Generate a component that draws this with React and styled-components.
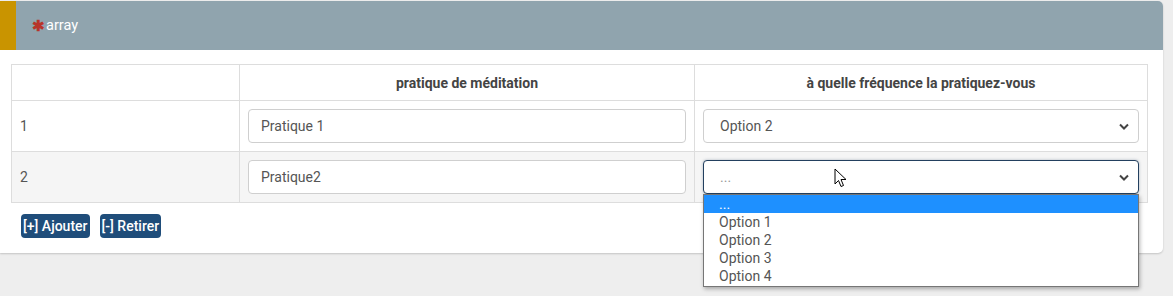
import React from "react";
import styled, { createGlobalStyle } from "styled-components";

const GlobalStyle = createGlobalStyle`
  body {
    margin: 0;
    background: #eeeeee;
    font-family: Roboto, "Liberation Sans", sans-serif;
  }
`;

const rows = [
  { id: 1, practice: "Pratique 1", frequency: "Option 2" },
  { id: 2, practice: "Pratique2", frequency: "...", open: true },
];

const options = ["...", "Option 1", "Option 2", "Option 3", "Option 4"];

function Chevron() {
  return (
    <svg width="10" height="7" viewBox="0 0 10 7">
      <path d="M1 1.5 L5 5.5 L9 1.5" fill="none" stroke="#444" strokeWidth="2" />
    </svg>
  );
}

function Cursor() {
  return (
    <svg width="14" height="20" viewBox="0 0 14 20">
      <path
        d="M1 1 L1 16 L4.5 12.5 L7 18.5 L9.5 17.5 L7 11.5 L12 11.5 Z"
        fill="#fff"
        stroke="#000"
        strokeWidth="1"
        strokeLinejoin="round"
      />
    </svg>
  );
}

export default function App() {
  return (
    <Page>
      <GlobalStyle />
      <Panel>
        <Header>
          <Required>✱</Required>array
        </Header>
        <Body>
          <Table>
            <thead>
              <tr>
                <HeadCell $width={228}></HeadCell>
                <HeadCell $width={455}>pratique de méditation</HeadCell>
                <HeadCell>à quelle fréquence la pratiquez-vous</HeadCell>
              </tr>
            </thead>
            <tbody>
              {rows.map((row) => (
                <Row key={row.id} $striped={row.id % 2 === 0}>
                  <Cell>{row.id}</Cell>
                  <Cell>
                    <TextInput value={row.practice} readOnly />
                  </Cell>
                  <Cell>
                    <SelectWrap>
                      <SelectBox $focused={row.open}>
                        <SelectValue $muted={row.frequency === "..."}>
                          {row.frequency}
                        </SelectValue>
                        <Chevron />
                      </SelectBox>
                      {row.open && (
                        <>
                          <CursorSpot>
                            <Cursor />
                          </CursorSpot>
                          <ListBox>
                            {options.map((opt) => (
                              <OptionItem key={opt} $active={opt === row.frequency}>
                                {opt}
                              </OptionItem>
                            ))}
                          </ListBox>
                        </>
                      )}
                    </SelectWrap>
                  </Cell>
                </Row>
              ))}
            </tbody>
          </Table>
          <Actions>
            <ActionButton>[+] Ajouter</ActionButton>
            <ActionButton>[-] Retirer</ActionButton>
          </Actions>
        </Body>
      </Panel>
    </Page>
  );
}

const Page = styled.div`
  min-height: 296px;
  padding-top: 1px;
  box-sizing: border-box;
`;

const Panel = styled.div`
  width: 1163px;
  background: #fff;
  border-radius: 0 5px 5px 0;
  box-shadow: 0 1px 2px rgba(0, 0, 0, 0.18);
`;

const Header = styled.div`
  height: 49px;
  display: flex;
  align-items: center;
  padding-left: 16px;
  background: #90a4ae;
  border-left: 16px solid #c99400;
  border-top-right-radius: 5px;
  color: #fff;
  font-size: 14.5px;
`;

const Required = styled.span`
  color: #b8342a;
  font-size: 15px;
  font-weight: 700;
  margin-right: 1px;
`;

const Body = styled.div`
  padding: 14px 15px 15px 11px;
`;

const Table = styled.table`
  width: 1137px;
  border-collapse: collapse;
  table-layout: fixed;
  border: 1px solid #dddddd;
  font-size: 14px;
  color: #555;
`;

const HeadCell = styled.th`
  box-sizing: border-box;
  width: ${(p) => (p.$width ? `${p.$width}px` : "auto")};
  height: 36px;
  padding: 0 8px;
  border: 1px solid #dddddd;
  font-size: 14px;
  font-weight: 700;
  color: #444;
  text-align: center;
`;

const Row = styled.tr`
  background: ${(p) => (p.$striped ? "#f5f5f5" : "#fff")};
`;

const Cell = styled.td`
  height: 51px;
  padding: 0 8px;
  border: 1px solid #dddddd;
  box-sizing: border-box;
`;

const TextInput = styled.input`
  box-sizing: border-box;
  width: 100%;
  height: 34px;
  padding: 0 12px;
  border: 1px solid #cfcfcf;
  border-radius: 4px;
  background: #fff;
  font-family: Roboto, "Liberation Sans", sans-serif;
  font-size: 14px;
  color: #555;
  outline: none;
`;

const SelectWrap = styled.div`
  position: relative;
`;

const SelectBox = styled.div`
  box-sizing: border-box;
  height: 34px;
  display: flex;
  align-items: center;
  justify-content: space-between;
  padding: 0 9px 0 16px;
  border: 1px solid ${(p) => (p.$focused ? "#23405f" : "#cfcfcf")};
  border-radius: 4px;
  background: #fff;
  box-shadow: ${(p) => (p.$focused ? "0 0 3px rgba(35, 64, 95, 0.35)" : "none")};
`;

const SelectValue = styled.span`
  color: ${(p) => (p.$muted ? "#999" : "#555")};
  font-size: 14px;
`;

const CursorSpot = styled.div`
  position: absolute;
  left: 131px;
  top: 8px;
  line-height: 0;
`;

const ListBox = styled.div`
  position: absolute;
  top: 34px;
  left: 0;
  right: 0;
  z-index: 2;
  background: #fff;
  border: 1px solid #767676;
  box-shadow: 1px 2px 4px rgba(0, 0, 0, 0.3);
  padding-bottom: 1px;
`;

const OptionItem = styled.div`
  height: 18px;
  line-height: 18px;
  padding-left: 15px;
  font-size: 14px;
  color: ${(p) => (p.$active ? "#fff" : "#555")};
  background: ${(p) => (p.$active ? "#1e90ff" : "transparent")};
`;

const Actions = styled.div`
  display: flex;
  gap: 10px;
  margin: 11px 0 0 10px;
`;

const ActionButton = styled.button`
  height: 24px;
  padding: 0 2px;
  border: none;
  border-radius: 4px;
  background: #1f4d7a;
  color: #fff;
  font-family: Roboto, "Liberation Sans", sans-serif;
  font-size: 14px;
  font-weight: 500;
`;
